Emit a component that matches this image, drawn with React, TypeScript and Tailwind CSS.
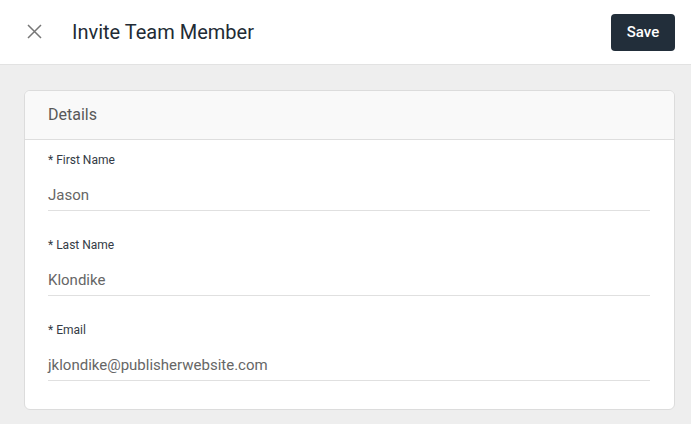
import React from "react";

const fields = [
  { label: "* First Name", value: "Jason" },
  { label: "* Last Name", value: "Klondike" },
  { label: "* Email", value: "jklondike@publisherwebsite.com" },
];

export default function App() {
  return (
    <div
      className="w-[691px] h-[424px] bg-[#eeeeee] overflow-hidden"
      style={{ fontFamily: "Roboto, 'Noto Sans', sans-serif" }}
    >
      <header className="h-[65px] bg-white border-b border-[#e2e2e2] flex items-center pl-[27px] pr-4">
        <button className="w-[15px] h-[15px] flex items-center justify-center text-[#767676] mt-[-1px]">
          <svg width="15" height="15" viewBox="0 0 15 15" fill="none">
            <path d="M1 1L14 14M14 1L1 14" stroke="currentColor" strokeWidth="1.5" />
          </svg>
        </button>
        <h1 className="ml-[30px] text-[20px] leading-7 text-[#222b35] font-normal mt-[-1px]">
          Invite Team Member
        </h1>
        <button className="ml-auto w-[64px] h-[37px] rounded-[4px] bg-[#222e3a] text-white text-[15px] font-medium">
          Save
        </button>
      </header>
      <main className="pl-6 pr-4 pt-[25px]">
        <div className="bg-white border border-[#dcdcdc] rounded-[6px] overflow-hidden">
          <div className="h-[49px] bg-[#f9f9f9] border-b border-[#dedede] flex items-center pl-[23px]">
            <span className="text-[16px] text-[#585858]">Details</span>
          </div>
          <div className="pl-[23px] pr-6 pt-[12px] pb-[28px] flex flex-col gap-[26px]">
            {fields.map((f) => (
              <div key={f.label}>
                <div className="text-[12px] leading-4 text-[#333b45]">{f.label}</div>
                <div className="mt-[17px] pb-[5px] border-b border-[#e0e0e0] text-[15px] leading-5 text-[#666666]">
                  {f.value}
                </div>
              </div>
            ))}
          </div>
        </div>
      </main>
    </div>
  );
}
